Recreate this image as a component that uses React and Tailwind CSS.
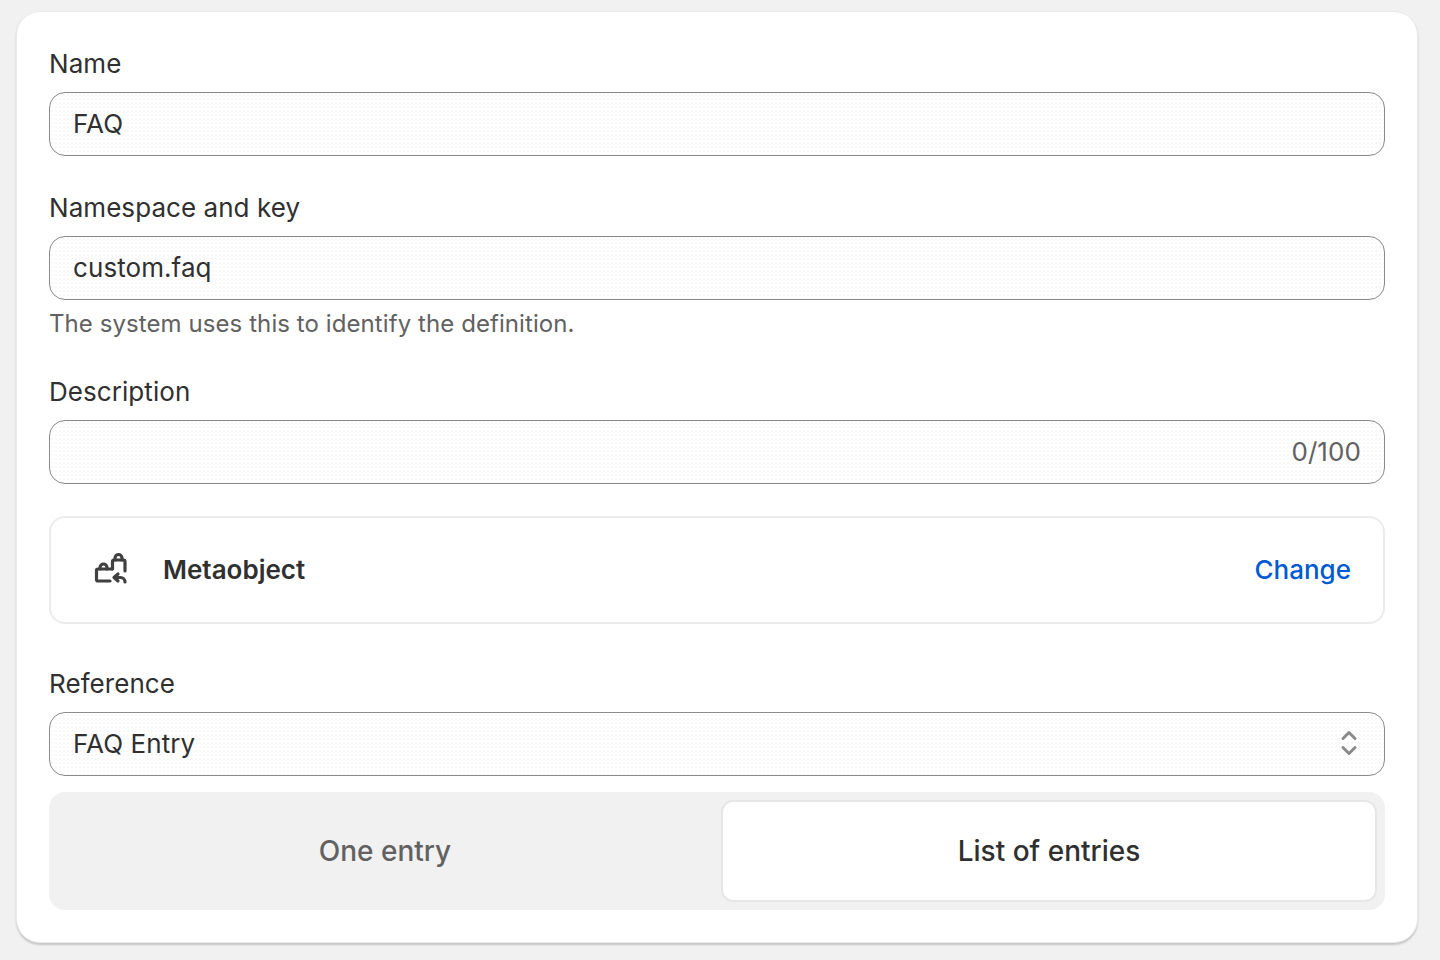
function Field({ label, value, right, children }) {
  return (
    <div className="flex flex-col">
      <label className="text-[26px] leading-[40px] text-[#303030] mb-2 tracking-[0.06px]">{label}</label>
      <div className="h-16 flex items-center justify-between pl-[23px] pr-[23px] pb-0.5 rounded-2xl border border-[#8a8a8a] bg-white bg-[radial-gradient(#f8f8f8_1px,transparent_1px)] bg-[length:4px_4px] text-[26px] tracking-[0.08px] text-[#303030]">
        <span>{value}</span>
        {right}
      </div>
      {children}
    </div>
  )
}

function MetaobjectIcon() {
  return (
    <svg className="w-10 h-10 text-[#404040]" viewBox="0 0 40 40" fill="none" stroke="currentColor" strokeWidth="3.2" strokeLinecap="round" strokeLinejoin="round">
      <path d="M20 32H8a1.500 1.500 0 0 1-1.500-1.500V21.500A1.500 1.500 0 0 1 8 20H22" />
      <path d="M10 20v-1.500a3.500 3.500 0 0 1 3.500-3.500h0a3.500 3.500 0 0 1 3.500 3.500V20" />
      <path d="M22.500 20V12.500A1.500 1.500 0 0 1 24 11h9.500A1.500 1.500 0 0 1 35 12.500V22" />
      <path d="M25 11V9A3.500 3.500 0 0 1 28.500 5.500h0A3.500 3.500 0 0 1 32 9V11" />
      <path d="M28 25l-4 3.500 4 3.500" />
      <path d="M24.500 28.500h6a4.500 4.500 0 0 1 4.500 4.500" />
    </svg>
  )
}

export default function App() {
  return (
    <div className="min-h-[960px] bg-[#f1f1f1] pl-4 pr-[22px] pt-[11px] font-['Inter',sans-serif]">
      <div className="bg-white rounded-[24px] border border-[#e9e9e9] shadow-[0_2px_2px_rgba(0,0,0,0.18)] px-8 pt-8 pb-8">
        <Field label="Name" value="FAQ" />
        <div className="mt-8">
          <Field label="Namespace and key" value="custom.faq">
            <p className="mt-1 text-[24px] leading-[40px] tracking-[0.08px] text-[#616161]">The system uses this to identify the definition.</p>
          </Field>
        </div>
        <div className="mt-7">
          <Field label="Description" value="" right={<span className="text-[#616161]">0/100</span>} />
        </div>
        <div className="mt-8 h-[108px] flex items-center justify-between pl-[39px] pr-8 pb-0.5 rounded-2xl border-2 border-[#ebebeb]">
          <div className="flex items-center gap-[33px]">
            <MetaobjectIcon />
            <span className="text-[26px] font-semibold text-[#303030]">Metaobject</span>
          </div>
          <span className="text-[26px] font-medium text-[#005bd3]">Change</span>
        </div>
        <div className="mt-10">
          <Field
            label="Reference"
            value="FAQ Entry"
            right={
              <svg className="w-6 h-8 text-[#8a8a8a]" viewBox="0 0 24 32" fill="none" stroke="currentColor" strokeWidth="3" strokeLinecap="round" strokeLinejoin="round">
                <path d="M6 11.500L12 5.500l6 6" />
                <path d="M6 20.500L12 26.500l6-6" />
              </svg>
            }
          />
        </div>
        <div className="mt-4 h-[118px] flex rounded-2xl bg-[#f1f1f1] py-2 pr-2 text-[28px] font-medium">
          <div className="w-[672px] flex items-center justify-center text-[#616161]">One entry</div>
          <div className="flex-1 flex items-center justify-center rounded-xl bg-white border-2 border-[#e6e6e6] text-[#303030]">List of entries</div>
        </div>
      </div>
    </div>
  )
}
